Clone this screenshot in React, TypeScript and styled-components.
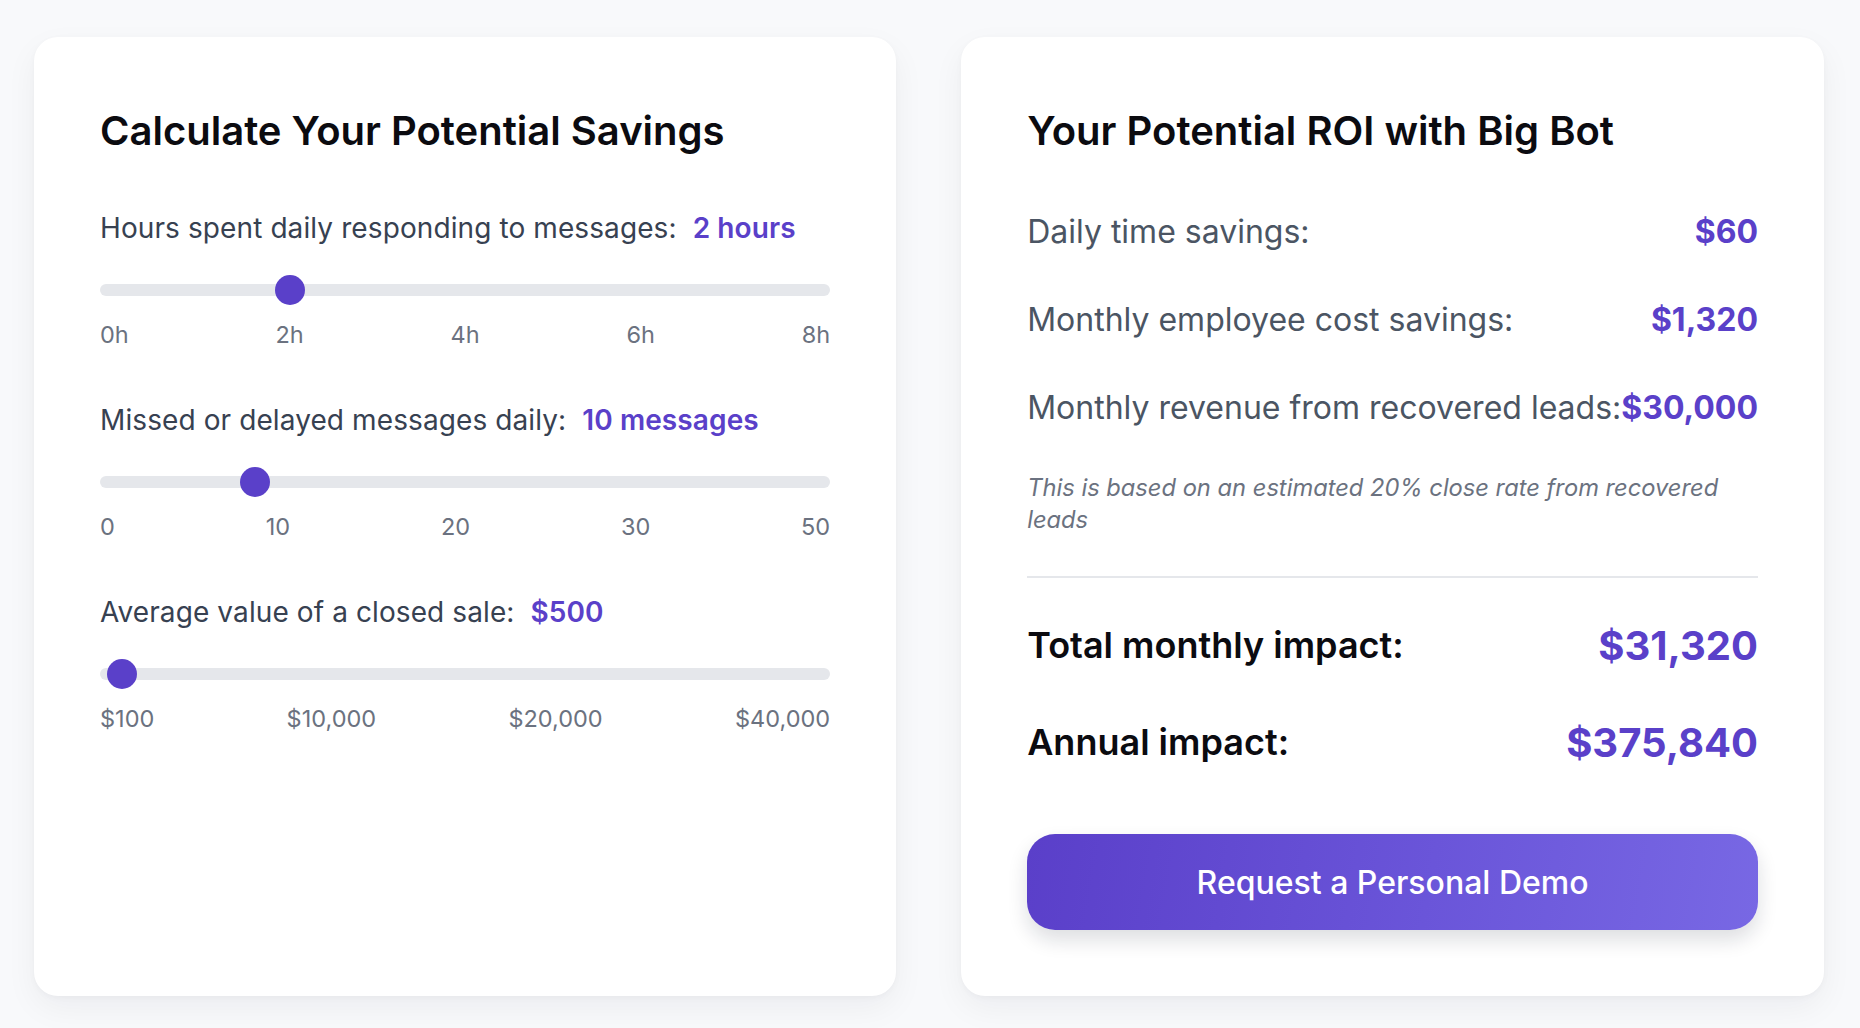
import { useState } from 'react';
import styled, { createGlobalStyle } from 'styled-components';

const ACCENT = '#5a40c9';

const GlobalStyle = createGlobalStyle`
  html, body {
    margin: 0;
    padding: 0;
    background: #f8f9fb;
    font-family: Inter, "Noto Sans", "Liberation Sans", sans-serif;
    -webkit-font-smoothing: antialiased;
  }
  * {
    box-sizing: border-box;
  }
`;

const Page = styled.div`
  display: grid;
  grid-template-columns: 1fr 1fr;
  gap: 65px;
  padding: 37px 36px 33px 34px;
`;

const Card = styled.section`
  display: flex;
  flex-direction: column;
  background: #ffffff;
  border-radius: 24px;
  padding: 67px 66px 66px;
  box-shadow: 0 12px 32px rgba(17, 24, 39, 0.05), 0 2px 6px rgba(17, 24, 39, 0.03);
`;

const Title = styled.h2`
  margin: 0 0 50px;
  font-size: 40px;
  line-height: 54px;
  font-weight: 600;
  color: #0b0b10;
`;

const Controls = styled.div`
  display: flex;
  flex-direction: column;
  gap: 49px;
`;

const Field = styled.div`
  display: flex;
  flex-direction: column;
`;

const FieldLabel = styled.label`
  display: flex;
  align-items: baseline;
  gap: 16px;
  font-size: 28px;
  line-height: 40px;
  letter-spacing: 0.1px;
  color: #374151;
`;

const FieldValue = styled.span`
  font-weight: 600;
  color: ${ACCENT};
`;

const Range = styled.input`
  -webkit-appearance: none;
  appearance: none;
  width: 100%;
  height: 30px;
  margin: 27px 0 0;
  padding: 0;
  background: transparent;
  cursor: pointer;

  &:focus {
    outline: none;
  }

  &::-webkit-slider-runnable-track {
    height: 12px;
    border-radius: 6px;
    background: #e5e7eb;
  }

  &::-webkit-slider-thumb {
    -webkit-appearance: none;
    appearance: none;
    width: 30px;
    height: 30px;
    margin-top: -9px;
    border-radius: 50%;
    background: ${ACCENT};
    border: none;
  }

  &::-moz-range-track {
    height: 12px;
    border-radius: 6px;
    background: #e5e7eb;
  }

  &::-moz-range-thumb {
    width: 30px;
    height: 30px;
    border-radius: 50%;
    background: ${ACCENT};
    border: none;
  }
`;

const Ticks = styled.div`
  display: flex;
  justify-content: space-between;
  margin-top: 14px;
  font-size: 23.5px;
  line-height: 32px;
  color: #6b7280;
`;

const Breakdown = styled.div`
  display: flex;
  flex-direction: column;
  gap: 40px;
`;

const Row = styled.div`
  display: flex;
  justify-content: space-between;
  align-items: baseline;
  font-size: 32px;
  line-height: 48px;
  white-space: nowrap;
`;

const RowLabel = styled.span`
  color: #4b5563;
`;

const RowValue = styled.span`
  font-weight: 700;
  color: ${ACCENT};
`;

const Note = styled.p`
  margin: 0;
  font-size: 23.7px;
  line-height: 32px;
  font-style: italic;
  color: #6b7280;
`;

const Divider = styled.hr`
  margin: 40px 0 0;
  border: none;
  height: 2px;
  background: #e5e7eb;
`;

const Totals = styled.div`
  display: flex;
  flex-direction: column;
  gap: 43px;
  margin-top: 40px;
`;

const TotalRow = styled.div`
  display: flex;
  justify-content: space-between;
  align-items: center;
  height: 54px;
  white-space: nowrap;
`;

const TotalLabel = styled.span`
  font-size: 36px;
  font-weight: 600;
  color: #0b0b10;
`;

const TotalValue = styled.span`
  font-size: 40px;
  font-weight: 700;
  color: ${ACCENT};
`;

const DemoButton = styled.button`
  margin-top: 65px;
  height: 96px;
  width: 100%;
  border: none;
  border-radius: 28px;
  background: linear-gradient(100deg, #5a3fc9 0%, #6a55d9 55%, #7868e4 100%);
  color: #ffffff;
  font-family: inherit;
  font-size: 32px;
  font-weight: 500;
  cursor: pointer;
  box-shadow: 0 10px 20px rgba(17, 24, 39, 0.14);

  &:hover {
    filter: brightness(1.05);
  }
`;

const money = (n: number) => '$' + Math.round(n).toLocaleString('en-US');

export default function App() {
  const [hours, setHours] = useState(2);
  const [missed, setMissed] = useState(10);
  const [saleValue, setSaleValue] = useState(500);

  const daily = hours * 30;
  const monthlyCost = daily * 22;
  const monthlyRevenue = missed * 30 * 0.2 * saleValue;
  const totalMonthly = monthlyCost + monthlyRevenue;
  const annual = totalMonthly * 12;

  return (
    <>
      <GlobalStyle />
      <Page>
        <Card>
          <Title>Calculate Your Potential Savings</Title>
          <Controls>
            <Field>
              <FieldLabel htmlFor="hours">
                Hours spent daily responding to messages:
                <FieldValue>{hours} hours</FieldValue>
              </FieldLabel>
              <Range
                id="hours"
                type="range"
                min={0}
                max={8}
                step={1}
                value={hours}
                onChange={(e) => setHours(Number(e.target.value))}
              />
              <Ticks>
                <span>0h</span>
                <span>2h</span>
                <span>4h</span>
                <span>6h</span>
                <span>8h</span>
              </Ticks>
            </Field>

            <Field>
              <FieldLabel htmlFor="missed">
                Missed or delayed messages daily:
                <FieldValue>{missed} messages</FieldValue>
              </FieldLabel>
              <Range
                id="missed"
                type="range"
                min={0}
                max={50}
                step={1}
                value={missed}
                onChange={(e) => setMissed(Number(e.target.value))}
              />
              <Ticks>
                <span>0</span>
                <span>10</span>
                <span>20</span>
                <span>30</span>
                <span>50</span>
              </Ticks>
            </Field>

            <Field>
              <FieldLabel htmlFor="sale">
                Average value of a closed sale:
                <FieldValue>{money(saleValue)}</FieldValue>
              </FieldLabel>
              <Range
                id="sale"
                type="range"
                min={100}
                max={40000}
                step={100}
                value={saleValue}
                onChange={(e) => setSaleValue(Number(e.target.value))}
              />
              <Ticks>
                <span>$100</span>
                <span>$10,000</span>
                <span>$20,000</span>
                <span>$40,000</span>
              </Ticks>
            </Field>
          </Controls>
        </Card>

        <Card>
          <Title>Your Potential ROI with Big Bot</Title>
          <Breakdown>
            <Row>
              <RowLabel>Daily time savings:</RowLabel>
              <RowValue>{money(daily)}</RowValue>
            </Row>
            <Row>
              <RowLabel>Monthly employee cost savings:</RowLabel>
              <RowValue>{money(monthlyCost)}</RowValue>
            </Row>
            <Row>
              <RowLabel>Monthly revenue from recovered leads:</RowLabel>
              <RowValue>{money(monthlyRevenue)}</RowValue>
            </Row>
            <Note>This is based on an estimated 20% close rate from recovered leads</Note>
          </Breakdown>
          <Divider />
          <Totals>
            <TotalRow>
              <TotalLabel>Total monthly impact:</TotalLabel>
              <TotalValue>{money(totalMonthly)}</TotalValue>
            </TotalRow>
            <TotalRow>
              <TotalLabel>Annual impact:</TotalLabel>
              <TotalValue>{money(annual)}</TotalValue>
            </TotalRow>
          </Totals>
          <DemoButton>Request a Personal Demo</DemoButton>
        </Card>
      </Page>
    </>
  );
}
